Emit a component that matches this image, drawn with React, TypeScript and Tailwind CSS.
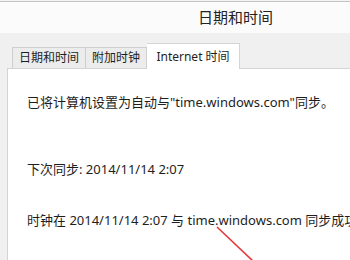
import React from "react";

export default function App() {
  const font = { fontFamily: '"Noto Sans", "Noto Sans CJK SC", sans-serif' };
  return (
    <div className="relative w-[350px] h-[260px] overflow-hidden bg-[#f0f0f0] text-[#1e1e1e]" style={font}>
      <div className="h-px bg-[#f4f4f4]" />
      <div className="h-px bg-[#c4c4c4]" />
      <div className="h-[31px] bg-[#fbfbfb] flex items-center pl-[198px] text-[15px] text-[#222]">
        日期和时间
      </div>
      <div className="h-[35px] flex items-end pl-[12px]">
        <div className="w-[74px] h-[21px] border border-b-0 border-[#cfcfcf] bg-[#ececec] flex items-center justify-center text-[12px] leading-none">
          日期和时间
        </div>
        <div className="w-[61px] h-[21px] border border-b-0 border-l-0 border-[#cfcfcf] bg-[#ececec] flex items-center justify-center text-[12px] leading-none">
          附加时钟
        </div>
        <div className="relative z-10 -mb-px w-[93px] h-[26px] border border-b-0 border-l-0 border-[#d4d4d4] bg-white flex items-center justify-center text-[12px] leading-none">
          Internet 时间
        </div>
      </div>
      <div className="ml-[7px] h-[200px] bg-white border-l border-t border-[#d4d4d4] pl-[19px] text-[13px] whitespace-nowrap">
        <div className="pt-[25px] leading-[16px]">已将计算机设置为自动与"time.windows.com"同步。</div>
        <div className="pt-[51px] leading-[16px]">下次同步: 2014/11/14 2:07</div>
        <div className="pt-[35px] leading-[16px]">时钟在 2014/11/14 2:07 与 time.windows.com 同步成功</div>
      </div>
      <svg className="absolute left-0 top-0" width="350" height="260">
        <line x1="217" y1="227" x2="254" y2="262" stroke="#e23a3a" strokeWidth="1.6" />
      </svg>
    </div>
  );
}
